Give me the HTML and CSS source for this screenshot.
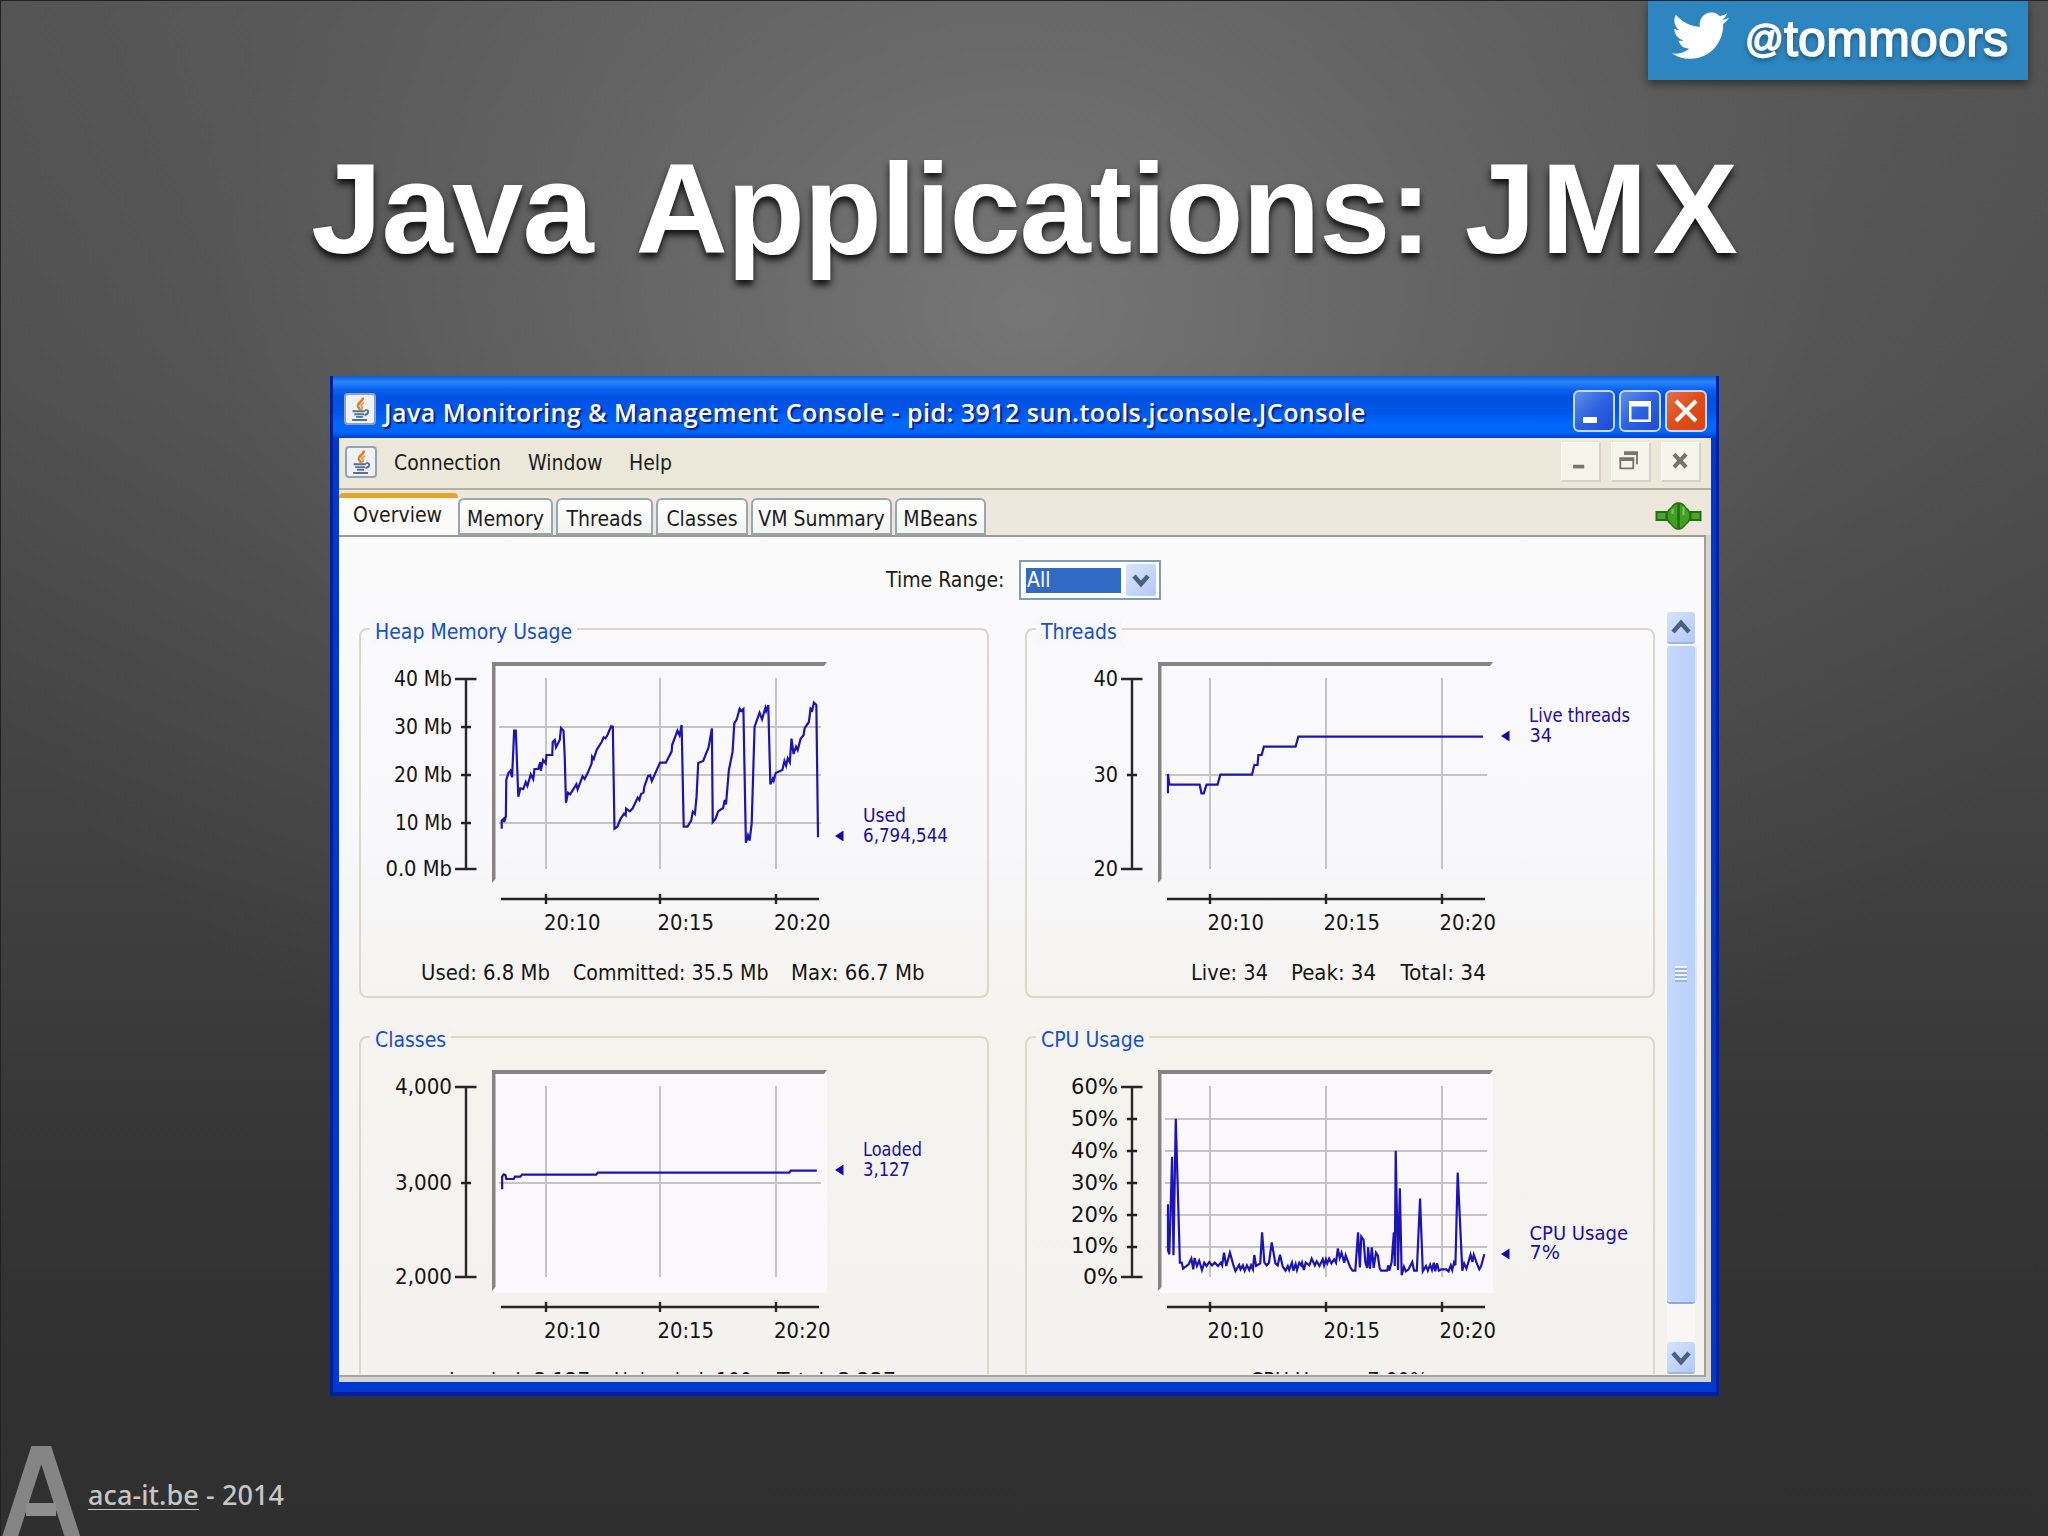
FILE: index.html
```html
<!DOCTYPE html>
<html lang="en">
<head>
<meta charset="utf-8">
<title>Java Applications: JMX</title>
<link rel="stylesheet" href="styles.css">
</head>
<body>
<svg width="0" height="0" class="defs">
  <defs>
    <symbol id="java" viewBox="0 0 31 32">
      <path d="M18.500 3c1.500 4-6 5.500-5.500 9.500.4 2 2 2.500 2.500 4.500" fill="none" stroke="#e07c28" stroke-width="2.800"/>
      <path d="M20 9c-3 1.500-4 3-2.500 4.500.8 1 .4 2-.8 3" fill="none" stroke="#ee9848" stroke-width="2.200"/>
      <path d="M7 18.500h14M9 22h11M11 25h8M21 17.500c5.500-1.500 5 4.500-.5 5.500M6.500 28.500h17" fill="none" stroke="#4f7396" stroke-width="2.200"/>
    </symbol>
    <symbol id="axes" viewBox="360 629 628 368">
      <path d="M466 679V869M455 679h21.500M455 869h21.500M501 899h318M660 894v10M776 894v10" fill="none" stroke="#262626" stroke-width="2.400"/>
      <path d="M492 883V662h335l-3 4H495.500v213z" fill="#858482"/>
    </symbol>
  </defs>
</svg>

<h1 class="title"><span class="w1">Java</span> <span class="w2">Applications:</span> <span class="w3">JMX</span></h1>

<main class="window">
  <div class="titlebar">
    <svg class="appicon"><use href="#java"/></svg>
    <span class="caption">Java Monitoring &amp; Management Console - pid: 3912 sun.tools.jconsole.JConsole</span>
    <div class="controls">
      <svg class="ctl" viewBox="0 0 38 38"><rect x="8" y="25" width="14" height="6" fill="#fff"/></svg>
      <svg class="ctl" viewBox="0 0 38 38"><path d="M8 9h22v21H8zM10.500 14.500v13h17v-13z" fill="#fff" fill-rule="evenodd"/></svg>
      <svg class="ctl close" viewBox="0 0 38 38"><path d="M9 9l20 20M29 9L9 29" stroke="#fff" stroke-width="4.200"/></svg>
    </div>
  </div>
  <div class="menubar">
    <svg class="appicon"><use href="#java"/></svg>
    <nav class="menus"><span class="m1">Connection</span><span class="m2">Window</span><span class="m3">Help</span></nav>
    <div class="mdi">
      <svg viewBox="0 0 40 40"><path d="M12 25.500h12" stroke="#77756c" stroke-width="4"/></svg>
      <svg viewBox="0 0 40 40"><path d="M14 11.500h13V23M9 18h14v9.500H9z" fill="none" stroke="#77756c" stroke-width="2"/><path d="M13 11h15M8 17.500h16" stroke="#77756c" stroke-width="4"/></svg>
      <svg viewBox="0 0 40 40"><path d="M13 12l13 14M26 12L13 26" stroke="#77756c" stroke-width="4.500"/></svg>
    </div>
  </div>
  <div class="tabs">
    <div class="tab active t0">Overview</div>
    <div class="tab t1">Memory</div>
    <div class="tab t2">Threads</div>
    <div class="tab t3">Classes</div>
    <div class="tab t4">VM Summary</div>
    <div class="tab t5">MBeans</div>
    <svg class="plug" viewBox="0 0 46 28"><path d="M1 10h10v8H1zM35 10h10v8H35z" fill="#48a82c" stroke="#256b18" stroke-width="2"/><path d="M22.500 1c-4 0-5 3-7 5-3 2-4 4-4 8s1 6 4 8c2 2 3 5 7 5zM23.500 1c4 0 5 3 7 5 3 2 4 4 4 8s-1 6-4 8c-2 2-3 5-7 5z" fill="#3fa024" stroke="#256b18" stroke-width="1.500"/><path d="M17 7v5M28 5v8" stroke="#7acb5a" stroke-width="2"/></svg>
  </div>
  <section class="panel">
    <div class="range">
      <label>Time Range:</label>
      <div class="combo"><span class="value">All</span><svg class="drop" viewBox="0 0 30 32"><path d="M8 12l7 8 7-8" fill="none" stroke="#4a6184" stroke-width="4.500"/></svg></div>
    </div>
    <div class="scroll">
      <div class="charts">
        <article class="group">
          <h2 class="g1">Heap Memory Usage</h2>
          <svg class="chart" viewBox="360 629 628 368">
            <path class="grid" d="M546 678v191M660 678v191M776 678v191M499 727h322M499 775h322M499 823h322"/>
            <use href="#axes" x="360" y="629" width="628" height="368"/>
            <path class="tickmark" d="M461 727h10M461 775h10M461 823h10M546 894v10"/>
            <text x="394" y="686" textLength="58" lengthAdjust="spacingAndGlyphs">40 Mb</text><text x="394" y="734" textLength="58" lengthAdjust="spacingAndGlyphs">30 Mb</text><text x="394" y="782" textLength="58" lengthAdjust="spacingAndGlyphs">20 Mb</text><text x="395" y="830" textLength="57" lengthAdjust="spacingAndGlyphs">10 Mb</text><text x="385.500" y="876" textLength="66.500" lengthAdjust="spacingAndGlyphs">0.0 Mb</text>
            <text x="544" y="930" textLength="56.500" lengthAdjust="spacingAndGlyphs">20:10</text><text x="657.500" y="930" textLength="56.500" lengthAdjust="spacingAndGlyphs">20:15</text><text x="774" y="930" textLength="56.500" lengthAdjust="spacingAndGlyphs">20:20</text>
            <polyline class="line" transform="translate(350 610) scale(.41454 .33333)" points="366,656 366,632 371,626 372,636 376,620 377,510 382,490 387,482 391,502 396,362 400,362 406,560 411,535 418,537 424,516 428,528 436,493 442,508 445,477 454,477 459,456 460,482 466,450 472,460 474,435 488,435 489,396 494,390 497,412 506,390 509,354 515,362 518,440 521,578 526,548 531,553 546,523 549,538 561,499 566,507 573,490 583,460 584,440 588,447 595,420 607,396 612,382 616,385 620,378 630,349 634,350 638,656 645,650 652,628 661,611 665,616 666,596 675,604 682,595 694,563 698,570 702,552 708,548 710,530 719,498 724,496 728,513 748,458 762,458 776,424 777,405 790,362 795,376 800,345 805,650 814,650 823,632 827,605 832,612 836,560 840,459 852,453 865,412 873,355 875,636 882,626 888,604 900,594 904,570 907,583 914,480 923,425 927,340 933,328 940,296 944,303 949,297 955,698 960,676 964,692 969,640 976,350 988,308 994,328 1002,293 1004,303 1009,285 1014,523 1020,506 1022,512 1027,489 1043,480 1048,453 1052,467 1056,445 1061,457 1065,386 1070,432 1076,410 1080,420 1087,386 1094,376 1097,354 1107,336 1111,296 1115,301 1119,278 1125,285 1129,682"/>
            <path class="arrow" d="M835 836l8.500-5.500v11z"/>
            <text class="mark" x="863" y="822" textLength="43" lengthAdjust="spacingAndGlyphs">Used</text><text class="mark" x="863" y="842" textLength="85" lengthAdjust="spacingAndGlyphs">6,794,544</text>
            <text x="421" y="979.500" textLength="129" lengthAdjust="spacingAndGlyphs">Used: 6.8 Mb</text><text x="573" y="979.500" textLength="195.500" lengthAdjust="spacingAndGlyphs">Committed: 35.5 Mb</text><text x="791" y="979.500" textLength="133.500" lengthAdjust="spacingAndGlyphs">Max: 66.7 Mb</text>
          </svg>
        </article>
        <article class="group">
          <h2 class="g2">Threads</h2>
          <svg class="chart" viewBox="360 629 628 368">
            <path class="grid" d="M544 678v191M660 678v191M776 678v191M499 775h322"/>
            <use href="#axes" x="360" y="629" width="628" height="368"/>
            <path class="tickmark" d="M461 775h10M544 894v10"/>
            <text x="427.500" y="686" textLength="24.500" lengthAdjust="spacingAndGlyphs">40</text><text x="427.500" y="782" textLength="24.500" lengthAdjust="spacingAndGlyphs">30</text><text x="427.500" y="876" textLength="24.500" lengthAdjust="spacingAndGlyphs">20</text>
            <text x="541.500" y="930" textLength="56.500" lengthAdjust="spacingAndGlyphs">20:10</text><text x="657.500" y="930" textLength="56.500" lengthAdjust="spacingAndGlyphs">20:15</text><text x="773.500" y="930" textLength="56.500" lengthAdjust="spacingAndGlyphs">20:20</text>
            <polyline class="line" transform="translate(344 610) scale(.45918 .33333)" points="344,550 344,492 347,524 413,524 417,550 422,550 428,524 452,524 458,494 527,494 532,465 539,465 541,435 548,435 553,410 622,410 628,380 1030,380"/>
            <path class="arrow" d="M835 736l8.500-5.500v11z"/>
            <text class="mark" x="863" y="722" textLength="101" lengthAdjust="spacingAndGlyphs">Live threads</text><text class="mark" x="863.500" y="742" textLength="22.500" lengthAdjust="spacingAndGlyphs">34</text>
            <text x="525" y="979.500" textLength="77" lengthAdjust="spacingAndGlyphs">Live: 34</text><text x="625" y="979.500" textLength="85" lengthAdjust="spacingAndGlyphs">Peak: 34</text><text x="734.500" y="979.500" textLength="85.500" lengthAdjust="spacingAndGlyphs">Total: 34</text>
          </svg>
        </article>
        <article class="group">
          <h2 class="g3">Classes</h2>
          <svg class="chart" viewBox="360 629 628 368">
            <rect class="plot" x="494" y="664" width="333" height="221"/>
            <path class="grid" d="M546 678v191M660 678v191M776 678v191M499 775h322"/>
            <use href="#axes" x="360" y="629" width="628" height="368"/>
            <path class="tickmark" d="M461 775h10M546 894v10"/>
            <text x="395" y="686" textLength="57" lengthAdjust="spacingAndGlyphs">4,000</text><text x="395" y="782" textLength="57" lengthAdjust="spacingAndGlyphs">3,000</text><text x="395" y="876" textLength="57" lengthAdjust="spacingAndGlyphs">2,000</text>
            <text x="544" y="930" textLength="56.500" lengthAdjust="spacingAndGlyphs">20:10</text><text x="657.500" y="930" textLength="56.500" lengthAdjust="spacingAndGlyphs">20:15</text><text x="774" y="930" textLength="56.500" lengthAdjust="spacingAndGlyphs">20:20</text>
            <polyline class="line" transform="translate(350 612) scale(.41454 .33333)" points="367,508 367,470 371,463 375,465 377,477 395,477 398,470 411,470 415,464 594,464 598,458 1060,458 1063,452 1126,452"/>
            <path class="arrow" d="M835 762l8.500-5.500v11z"/>
            <text class="mark" x="863" y="748" textLength="59" lengthAdjust="spacingAndGlyphs">Loaded</text><text class="mark" x="863" y="768" textLength="47" lengthAdjust="spacingAndGlyphs">3,127</text>
            <text x="449" y="980" textLength="141" lengthAdjust="spacingAndGlyphs">Loaded: 3,127</text><text x="614" y="980" textLength="138" lengthAdjust="spacingAndGlyphs">Unloaded: 100</text><text x="777" y="980" textLength="119" lengthAdjust="spacingAndGlyphs">Total: 3,227</text>
          </svg>
        </article>
        <article class="group">
          <h2 class="g4">CPU Usage</h2>
          <svg class="chart" viewBox="360 629 628 368">
            <rect class="plot" x="494" y="664" width="333" height="221"/>
            <path class="grid" d="M544 678v191M660 678v191M776 678v191M499 711h322M499 743h322M499 775h322M499 807h322M499 839h322"/>
            <use href="#axes" x="360" y="629" width="628" height="368"/>
            <path class="tickmark" d="M461 711h10M461 743h10M461 775h10M461 807h10M461 839h10M544 894v10"/>
            <text x="405" y="686" textLength="47" lengthAdjust="spacingAndGlyphs">60%</text><text x="405" y="718" textLength="47" lengthAdjust="spacingAndGlyphs">50%</text><text x="405" y="750" textLength="47" lengthAdjust="spacingAndGlyphs">40%</text><text x="405" y="782" textLength="47" lengthAdjust="spacingAndGlyphs">30%</text><text x="405" y="814" textLength="47" lengthAdjust="spacingAndGlyphs">20%</text><text x="405" y="845" textLength="47" lengthAdjust="spacingAndGlyphs">10%</text><text x="417" y="876" textLength="35" lengthAdjust="spacingAndGlyphs">0%</text>
            <text x="541.500" y="930" textLength="56.500" lengthAdjust="spacingAndGlyphs">20:10</text><text x="657.500" y="930" textLength="56.500" lengthAdjust="spacingAndGlyphs">20:15</text><text x="773.500" y="930" textLength="56.500" lengthAdjust="spacingAndGlyphs">20:20</text>
            <polyline class="line" transform="translate(344 612) scale(.45918 .33333)" points="344,553 344,690 347,703 353,410 356,706 361,296 370,728 374,728 377,746 389,733 395,716 399,748 402,714 407,738 412,722 418,750 423,728 428,738 434,726 440,736 446,728 453,738 459,728 462,736 466,698 471,738 479,698 487,738 491,753 499,735 502,748 507,736 511,752 516,736 521,750 525,736 529,748 532,705 536,738 545,730 549,637 554,728 559,736 564,728 570,667 578,730 583,736 588,704 594,740 600,752 605,738 608,750 614,728 617,752 622,732 625,750 630,728 634,736 636,728 640,750 644,728 652,736 657,716 664,736 668,724 674,738 681,718 684,736 688,718 691,730 695,716 700,730 706,718 710,728 714,685 718,714 722,698 728,728 731,706 736,724 741,742 746,752 752,752 758,637 762,742 765,650 770,660 774,728 778,744 780,682 784,746 788,682 792,744 797,698 801,706 805,744 808,752 821,752 824,736 826,752 831,728 836,637 838,738 840,392 845,750 849,505 853,766 858,740 862,754 868,748 876,726 880,752 886,752 893,536 899,754 906,738 910,752 915,734 919,750 923,728 926,754 930,730 934,752 939,748 950,748 955,754 960,736 963,750 967,728 970,736 975,458 985,752 989,730 994,746 998,728 1003,704 1007,726 1010,704 1016,728 1022,748 1026,738 1033,703"/>
            <path class="arrow" d="M835 846l8.500-5.500v11z"/>
            <text class="mark" x="863.500" y="832" textLength="98.500" lengthAdjust="spacingAndGlyphs">CPU Usage</text><text class="mark" x="863.500" y="851" textLength="30.500" lengthAdjust="spacingAndGlyphs">7%</text>
            <text x="584" y="980" textLength="178" lengthAdjust="spacingAndGlyphs">CPU Usage: 7.00%</text>
          </svg>
        </article>
      </div>
      <div class="scrollbar">
        <svg class="arrowbtn" viewBox="0 0 28 30"><path d="M6 20l8-9 8 9" fill="none" stroke="#4a6184" stroke-width="4.500"/></svg>
        <div class="thumb"><i></i></div>
        <svg class="arrowbtn" viewBox="0 0 28 30"><path d="M6 11l8 9 8-9" fill="none" stroke="#4a6184" stroke-width="4.500"/></svg>
      </div>
    </div>
  </section>
</main>

<footer class="footer">
  <svg class="logo" viewBox="0 0 80 90"><path d="M6 100L41.500-10M39-10L74.500 100" fill="none" stroke="#858585" stroke-width="15"/><path d="M25 63.500h30" stroke="#8f8f8f" stroke-width="13"/></svg>
  <span class="credit"><u>aca-it.be</u> - 2014</span>
</footer>

<aside class="badge">
  <svg class="bird" viewBox="0 3.500 24 19"><path d="M23.953 4.570a10 10 0 01-2.825.775 4.958 4.958 0 002.163-2.723c-.951.555-2.005.959-3.127 1.184a4.920 4.920 0 00-8.384 4.482C7.690 8.095 4.067 6.130 1.640 3.162a4.822 4.822 0 00-.666 2.475c0 1.710.870 3.213 2.188 4.096a4.904 4.904 0 01-2.228-.616v.060a4.923 4.923 0 003.946 4.827 4.996 4.996 0 01-2.212.085 4.936 4.936 0 004.604 3.417 9.867 9.867 0 01-6.102 2.105c-.390 0-.779-.023-1.170-.067a13.995 13.995 0 007.557 2.209c9.053 0 13.998-7.496 13.998-13.985 0-.210 0-.420-.015-.630A9.935 9.935 0 0024 4.590z" fill="#fff"/></svg>
  <span class="handle"><span class="at">@</span>tommoors</span>
</aside>
</body>
</html>
```
FILE: styles.css
```css
* { box-sizing: border-box; }

body {
  margin: 0;
  width: 2048px;
  height: 1536px;
  overflow: hidden;
  position: relative;
  display: flex;
  flex-direction: column;
  border-left: 1px solid #222;
  border-top: 1px solid #222;
  background:
    radial-gradient(ellipse 1150px 900px at 1024px 310px, rgba(160, 160, 160, .48) 0%, rgba(150, 150, 150, .3) 35%, rgba(140, 140, 140, .1) 70%, rgba(140, 140, 140, 0) 100%),
    linear-gradient(#535353 0%, #4e4e4e 25%, #414141 55%, #333 80%, #2f2f2f 100%);
  font-family: "DejaVu Sans Condensed", "DejaVu Sans", sans-serif;
  font-stretch: condensed;
  font-size: 21px;
  color: #1c1c1c;
}

.defs { position: absolute; }

.title {
  margin: 136px 0 0;
  height: 143px;
  font: bold 128px/143px "Liberation Sans", Arial, sans-serif;
  color: #fff;
  text-align: center;
  white-space: nowrap;
  text-shadow: 0 5px 7px rgba(0, 0, 0, .85);
}

.w1 { letter-spacing: -.7px; }
.w2 { letter-spacing: -1.2px; margin-left: 7px; }
.w3 { letter-spacing: 5px; margin: 0 -5px 0 -1.5px; }

/* Window */
.window {
  width: 1389px;
  height: 1020px;
  margin: 96px 0 0 329px;
  padding: 0 5px 6px 6px;
  background: #0038d0;
  border: solid #0020a0;
  border-width: 0 3px 4px 3px;
}

.titlebar {
  height: 62px;
  margin: 0 -5px 0 -6px;
  padding: 14px 9px 0 11px;
  display: flex;
  background: linear-gradient(#0a5cd8 0, #2a86fa 6px, #0a5ff0 14px, #0052e0 22px, #0056e8 36px, #0068fc 48px, #0066fa 56px, #0040c8 62px);
}

.appicon {
  width: 32px;
  height: 32px;
  flex: none;
  margin-top: 3px;
  background: #f0f1f2;
  border: 2px solid #93a2b4;
  border-radius: 4px;
  overflow: visible;
}

.menubar .appicon { margin-top: 4px; }

.caption {
  flex: 1;
  margin-left: 8px;
  font: 600 25px/44px "Open Sans", sans-serif;
  font-stretch: normal;
  letter-spacing: .46px;
  color: #fff;
  white-space: nowrap;
  text-shadow: 2px 2px 1px #10208c;
}

.controls { display: flex; gap: 4px; }

.ctl {
  width: 42px;
  height: 42px;
  border: 2px solid #c8d8fa;
  border-radius: 6px;
  background: linear-gradient(135deg, #6090e8, #2c62e0 50%, #1c4cd4);
}

.ctl.close { background: linear-gradient(135deg, #e0704c, #e04c18 50%, #d84410); }

.menubar {
  height: 52px;
  padding: 4px 10px 0 6px;
  display: flex;
  background: #ebe8da;
  border-bottom: 2px solid #b4b0a4;
}

.menus {
  flex: 1;
  display: flex;
  margin-left: 17px;
  line-height: 42px;
  white-space: nowrap;
}

.m1 { width: 134px; }
.m2 { width: 101px; }

.mdi { display: flex; gap: 10px; }

.mdi svg {
  width: 40px;
  height: 40px;
  background: #f5f3ea;
  border: 1px solid #fbfaf5;
  border-right: 2px solid #d6d2c6;
  border-bottom: 2px solid #d6d2c6;
}

.tabs {
  height: 45px;
  display: flex;
  align-items: flex-end;
  background: #ece7da;
}

.tab {
  height: 37px;
  padding-top: 6px;
  line-height: 26px;
  text-align: center;
  white-space: nowrap;
  background: linear-gradient(#fff, #f3f3f1);
  border: 2px solid #98a6b2;
  border-radius: 6px 6px 0 0;
  border-bottom-color: #9aa4a8;
}

.tab.active {
  height: 42px;
  border: 0;
  border-top: 5px solid #e8a428;
  border-radius: 4px 4px 0 0;
  background: #fbfbfb;
  padding-top: 4px;
}

.t0 { width: 119px; padding-right: 2px; }
.t1 { width: 95px; }
.t2 { width: 97px; margin-left: 3px; }
.t3 { width: 92px; margin-left: 3px; }
.t4 { width: 141px; margin-left: 3px; }
.t5 { width: 91px; margin-left: 3px; }

.plug { width: 47px; height: 28px; margin: 0 9px 5px auto; }

.panel {
  height: 847px;
  border-right: 5px solid #d8d6cc;
  border-bottom: 5px solid #d4d4d2;
  box-shadow: inset 0 2px #9c9c94, inset -2px 0 #a0a098, inset 0 -2px #a4a4a0;
  background: linear-gradient(#fafafb 0, #f8f7fa 35%, #f4f3ee 62%, #f3f2ef 100%);
}

.range {
  height: 75px;
  padding: 25px 0 0 547px;
  display: flex;
  line-height: 41px;
}

.range label { width: 133px; white-space: nowrap; }

.combo {
  width: 142px;
  height: 40px;
  padding: 3px;
  display: flex;
  justify-content: space-between;
  align-items: center;
  border: 2px solid #7f9db9;
  background: #fff;
}

.value {
  width: 95px;
  height: 25px;
  margin-left: 2px;
  padding-left: 1px;
  line-height: 25px;
  color: #fff;
  background: #316ac5;
}

.drop { width: 30px; height: 32px; background: linear-gradient(135deg, #dbe5fd, #b4c8f4); border-radius: 2px; }

.scroll { display: flex; height: 764px; }

.charts {
  width: 1328px;
  height: 764px;
  padding: 18px 0 0 20px;
  display: grid;
  grid-template-columns: 630px 630px;
  grid-template-rows: 370px 370px;
  gap: 38px 36px;
  overflow: hidden;
}

.group {
  position: relative;
  border: 2px solid #d9d8ca;
  border-radius: 8px;
}

.group h2 {
  position: absolute;
  left: 9px;
  top: -11px;
  margin: 0;
  padding: 0 5px;
  font-size: 21px;
  font-weight: normal;
  line-height: 26px;
  white-space: nowrap;
  color: #1450c8;
  background: #f8f7fa;
}

.group .g3, .group .g4 { background: #f4f3ef; }

.chart { display: block; width: 628px; height: 368px; margin: -1px 0 0 -1px; }

.chart text { fill: #141414; font-size: 20.8px; }
.chart .mark { fill: #1a0ea8; font-size: 19.2px; }

.grid { fill: none; stroke: #c4c4c4; stroke-width: 2; }
.tickmark { fill: none; stroke: #222; stroke-width: 2.4; }
.plot { fill: #faf8fb; }
.line { fill: none; stroke: #1c14b4; stroke-width: 2.2; vector-effect: non-scaling-stroke; }
.arrow { fill: #1408a8; }

.scrollbar {
  width: 28px;
  height: 760px;
  margin-top: 2px;
  display: flex;
  flex-direction: column;
  background: #f8f7f6;
}

.arrowbtn {
  width: 28px;
  height: 30px;
  background: linear-gradient(135deg, #d4e2fd, #b2c8f6);
  border-radius: 3px;
  box-shadow: 0 2px #9db6dc;
  flex: none;
}

.thumb {
  height: 656px;
  margin: 4px 0 40px;
  border-radius: 3px;
  background: linear-gradient(90deg, #c6d8fc, #b9d0f8);
  box-shadow: 0 2px #8caade, 2px 0 #dce6f8;
  display: flex;
  align-items: center;
  justify-content: center;
}

.thumb i {
  width: 12px;
  height: 16px;
  background: repeating-linear-gradient(#eef4fe 0 2px, #9ab4e4 2px 4px);
}

/* Footer */
.footer {
  height: 90px;
  margin-top: 50px;
  display: flex;
}

.logo { width: 80px; height: 90px; flex: none; }

.credit {
  margin: 29px 0 0 7px;
  font: 500 27px/40px "Noto Sans", "Open Sans", sans-serif;
  font-stretch: normal;
  letter-spacing: .1px;
  color: #c6c6c6;
  white-space: nowrap;
}

.credit u { text-decoration-thickness: 1px; text-underline-offset: 4px; }

/* Twitter handle */
.badge {
  position: absolute;
  top: 0;
  left: 1647px;
  width: 380px;
  height: 79px;
  padding-left: 24px;
  display: flex;
  background: #2e86c0;
  box-shadow: 0 4px 8px rgba(0, 0, 0, .45);
}

.bird { width: 57px; height: 50px; margin-top: 12px; flex: none; overflow: visible; }

.handle {
  display: flex;
  align-items: baseline;
  margin-left: 16px;
  padding-top: 10px;
  font: 50px/56px "Liberation Sans", Arial, sans-serif;
  letter-spacing: .3px;
  color: #fff;
  -webkit-text-stroke: 1.6px #fff;
  text-shadow: 0 3px 5px rgba(0, 0, 0, .5);
}

.at { font-size: 38px; line-height: 40px; position: relative; top: -4px; }
```
